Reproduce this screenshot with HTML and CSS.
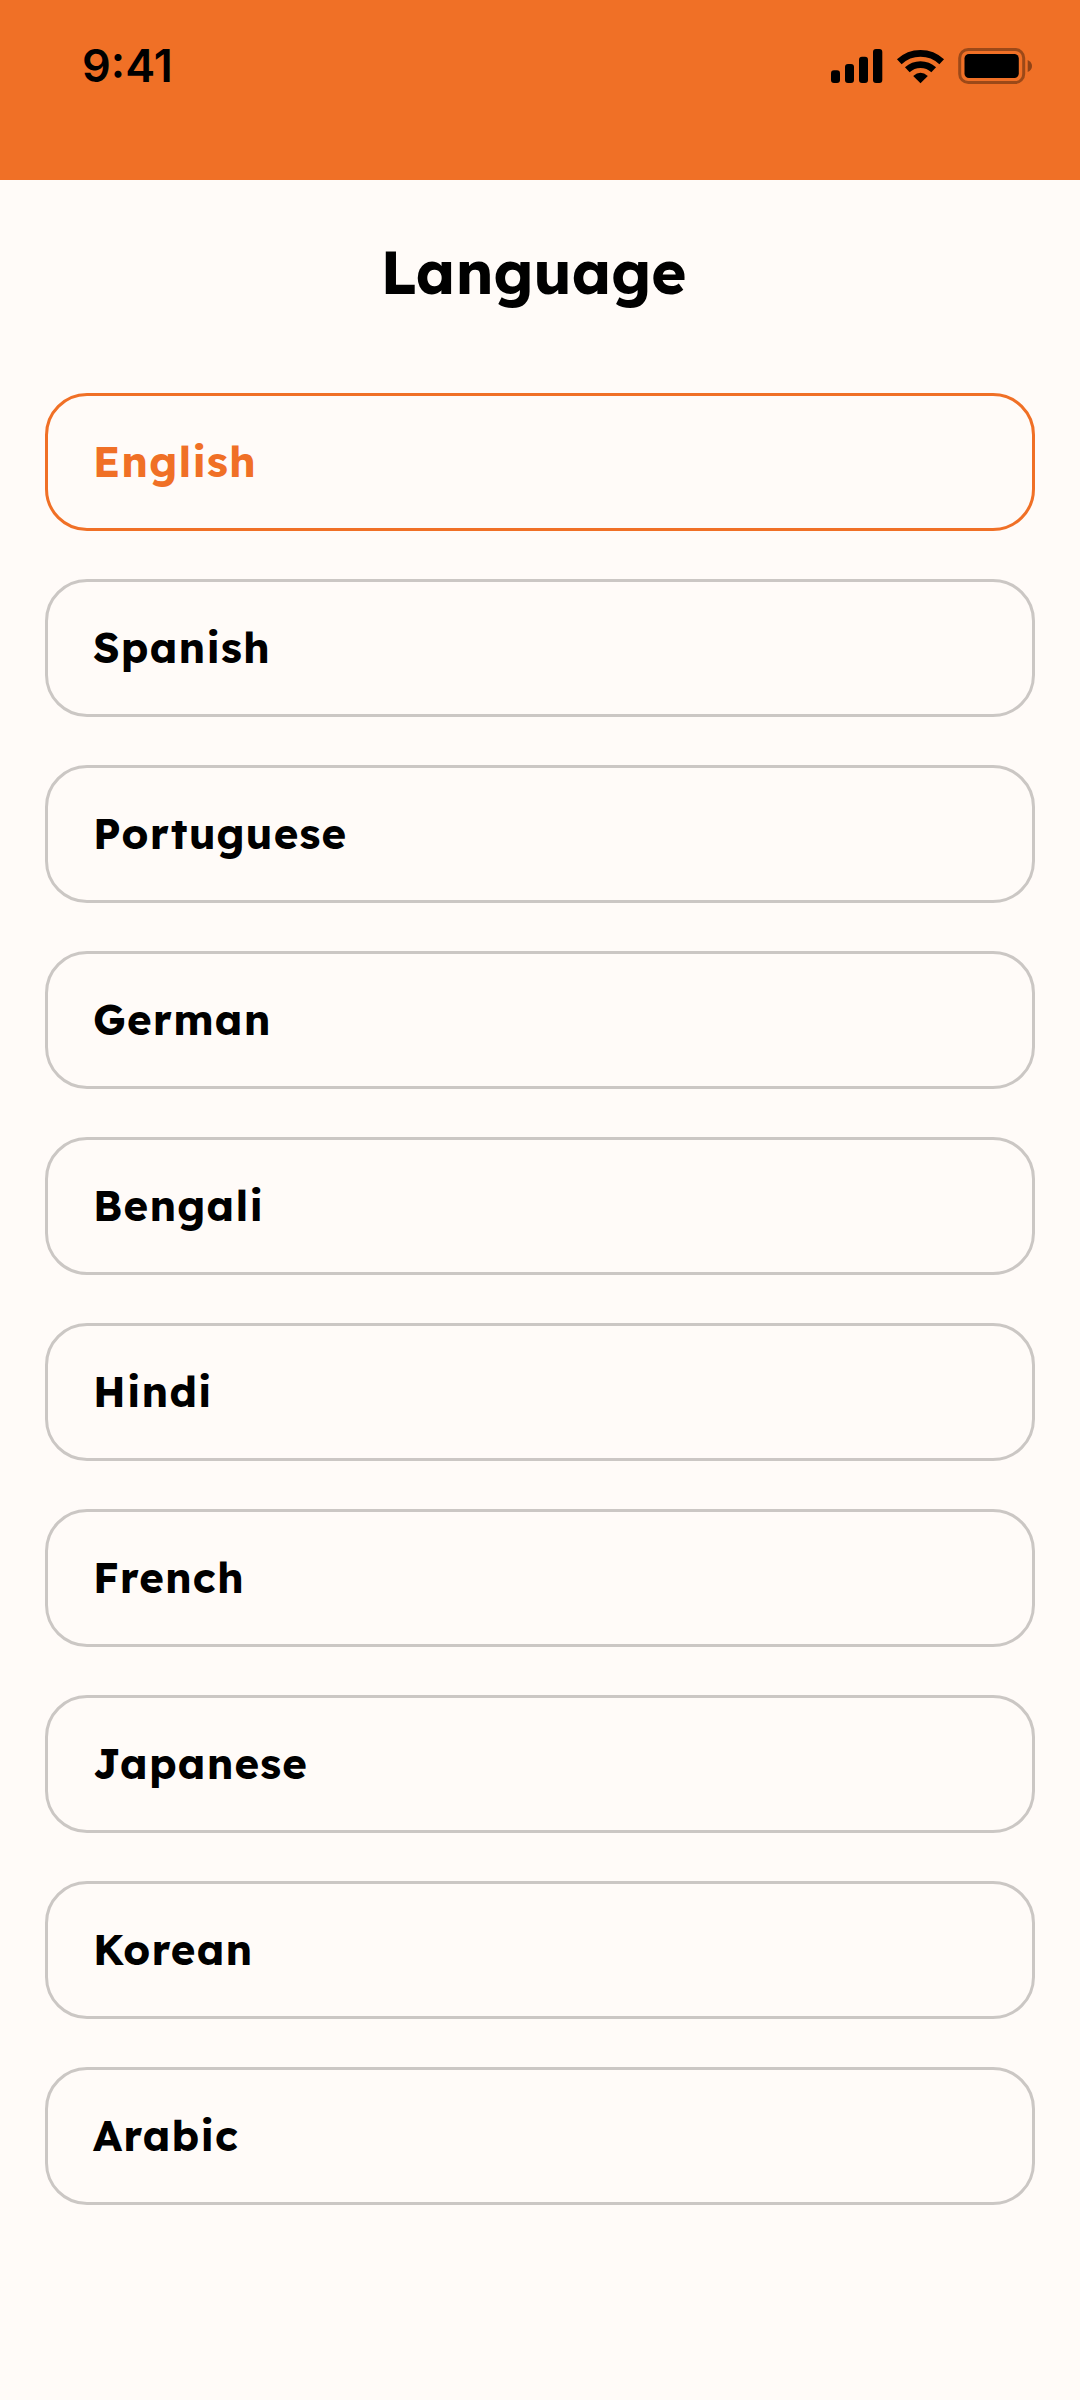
FILE: index.html
```
<!DOCTYPE html>
<html lang="en">
<head>
<meta charset="utf-8">
<title>Language</title>
<link rel="stylesheet" href="styles.css">
</head>
<body>
<header class="status-bar">
  <span class="time">9:41</span>
  <svg class="status-icons" width="202" height="38" viewBox="831 47 202 38" aria-hidden="true">
    <rect x="831" y="70.3" width="9" height="12.7" rx="3"/>
    <rect x="845" y="64" width="9" height="19" rx="3"/>
    <rect x="859" y="56.7" width="9" height="26.3" rx="3"/>
    <rect x="873" y="49" width="9.3" height="34" rx="3"/>
    <g fill="none" stroke="#000" stroke-width="6.8">
      <path d="M899.3 61.8A31 31 0 0 1 941.7 61.8"/>
      <path d="M907.3 69.8A19.2 19.2 0 0 1 933.7 69.8"/>
    </g>
    <path d="M920.5 83.3L913.2 76Q920.5 69.6 927.8 76Z"/>
    <rect x="959.7" y="49.5" width="64" height="33" rx="8.5" fill="none" stroke="#000" stroke-opacity=".35" stroke-width="3"/>
    <rect x="964.5" y="54" width="54.3" height="24" rx="4.5"/>
    <path d="M1027.7 60Q1032 62 1032 66T1027.7 72Z" fill-opacity=".4"/>
  </svg>
</header>
<main class="screen">
  <h1 class="title">Language</h1>
  <ul class="languages">
    <li class="language selected">English</li>
    <li class="language">Spanish</li>
    <li class="language">Portuguese</li>
    <li class="language">German</li>
    <li class="language">Bengali</li>
    <li class="language">Hindi</li>
    <li class="language">French</li>
    <li class="language">Japanese</li>
    <li class="language">Korean</li>
    <li class="language">Arabic</li>
  </ul>
</main>
</body>
</html>
```
FILE: styles.css
```
* {
  box-sizing: border-box;
}

body {
  margin: 0;
  min-height: 2400px;
  background: #fffbf8;
  color: #000;
  font-family: Lexend, Inter, "Noto Sans", sans-serif;
}

.status-bar {
  display: flex;
  justify-content: space-between;
  align-items: flex-start;
  height: 180px;
  padding: 47px 47px 0 82px;
  background: #f07026;
}

.time {
  font: 600 45px/37px Inter, sans-serif;
}

.status-icons {
  display: block;
}

.title {
  margin: 0;
  padding: 56px 13px 0 0;
  font-size: 60px;
  font-weight: 700;
  line-height: 72px;
  text-align: center;
}

.languages {
  display: grid;
  gap: 48px;
  margin: 85px 45px 0;
  padding: 0;
  list-style: none;
}

.language {
  display: flex;
  align-items: center;
  height: 138px;
  padding: 0 45px 2px;
  border: 3px solid #cbc7c4;
  border-radius: 42px;
  font-size: 42px;
  font-weight: 700;
  letter-spacing: 1.2px;
}

.selected {
  border-color: #f07026;
  color: #f07026;
}
```
